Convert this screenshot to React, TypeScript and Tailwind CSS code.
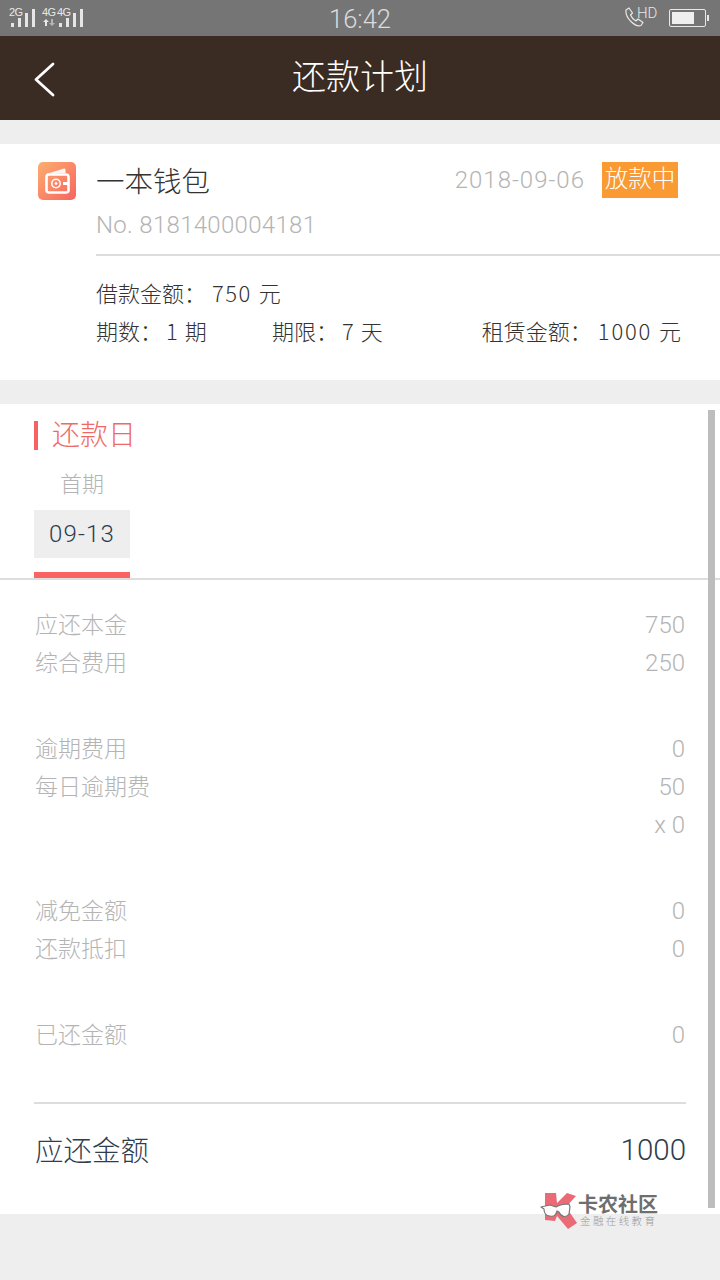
function SignalBars() {
  return (
    <div className="flex items-end gap-[4px]">
      {[4, 9, 14, 18].map((h, i) => (
        <span key={i} className="w-[3px] bg-[#e6e6e6]" style={{ height: h }} />
      ))}
    </div>
  );
}

function StatusBar() {
  return (
    <div className="relative h-[36px] bg-[#757575] font-['Liberation_Sans'] font-normal text-[#e8e8e8]">
      <div className="absolute left-[9px] top-[7px] text-[11px] leading-[11px] tracking-[-0.5px]">2G</div>
      <div className="absolute left-[11px] top-[9px]"><SignalBars /></div>
      <div className="absolute left-[42px] top-[7px] text-[11px] leading-[11px] tracking-[-0.5px]">4G</div>
      <div className="absolute left-[57px] top-[7px] text-[11px] leading-[11px] tracking-[-0.5px]">4G</div>
      <svg className="absolute left-[43px] top-[19px]" width="12" height="7" viewBox="0 0 12 7" fill="#e8e8e8">
        <path d="M3 0l3 3H4v4H2V3H0z" />
        <path d="M9 7L6 4h2V0h2v4h2z" opacity="0.55" />
      </svg>
      <div className="absolute left-[59px] top-[9px]"><SignalBars /></div>
      <div className="absolute inset-x-0 top-[3px] text-center font-['Roboto'] text-[25.5px] font-light leading-[32px] text-[#dcdcdc]">
        16:42
      </div>
      <svg className="absolute left-[625px] top-[7px]" width="21" height="20" viewBox="0 0 21 20" fill="none" stroke="#e8e8e8" strokeWidth="1.2" strokeLinejoin="round">
        <path d="M1 3l3-2 3.5 5-2 2c1 2.500 3 4.500 5.500 6l2-2 5 3.500-2 3c-3 1-6.500-.5-10-4S.5 6.500 1 3z" />
      </svg>
      <div className="absolute left-[637px] top-[4px] font-['Roboto'] text-[15px] font-light leading-[18px]">HD</div>
      <div className="absolute left-[669px] top-[9px] flex h-[18px] w-[37px] items-center rounded-[2px] border border-[#e8e8e8] p-[2px]">
        <div className="h-full w-[22px] bg-[#efefef]" />
      </div>
      <div className="absolute left-[707px] top-[15px] h-[6px] w-[2px] bg-[#e8e8e8]" />
    </div>
  );
}

function Header() {
  return (
    <div className="relative flex h-[84px] items-center justify-center bg-[#3a2c23] pb-[7px]">
      <svg className="absolute left-[33px] top-[25px]" width="24" height="38" viewBox="0 0 24 38" fill="none" stroke="#fff" strokeWidth="2.8" strokeLinecap="round" strokeLinejoin="round">
        <path d="M20 3L3 18.500 20 34" />
      </svg>
      <span className="text-[34px] leading-[40px] text-white">还款计划</span>
    </div>
  );
}

function WalletIcon() {
  return (
    <svg width="38" height="38" viewBox="0 0 38 38" className="shrink-0">
      <defs>
        <linearGradient id="wallet" x1="0" y1="0" x2="1" y2="1">
          <stop offset="0" stopColor="#fcae70" />
          <stop offset="1" stopColor="#f7645f" />
        </linearGradient>
      </defs>
      <rect width="38" height="38" rx="5" fill="url(#wallet)" />
      <path d="M8 12L26 6.500c1 0 1.500.5 1.500 1.500V11z" fill="#fff" opacity="0.9" />
      <rect x="8.500" y="12.500" width="22" height="18" rx="2.500" fill="none" stroke="#fff" strokeWidth="2.600" />
      <circle cx="18" cy="21.500" r="4.200" fill="none" stroke="#fff" strokeWidth="1.500" />
      <path d="M18 19.800l1.700 1.700-1.700 1.700-1.700-1.700z" fill="#fff" />
      <rect x="25" y="20" width="6" height="3" fill="#fff" />
    </svg>
  );
}

function LoanCard() {
  return (
    <div className="flex h-[236px] gap-[20px] bg-white pl-[38px] pt-[18px]">
      <WalletIcon />
      <div className="min-w-0 flex-1">
        <div className="flex h-[36px] pr-[42px]">
          <span className="text-[28.500px] leading-[36px] text-[#333]">一本钱包</span>
          <span className="ml-auto font-['Roboto'] text-[24px] font-light leading-[37px] tracking-[1px] text-[#b4b4b4]">2018-09-06</span>
          <span className="ml-[17px] h-[36px] w-[76px] bg-[#f99a33] text-center text-[23.500px] leading-[31px] text-white">放款中</span>
        </div>
        <div className="mt-[9px] font-['Roboto'] text-[24px] font-light leading-[36px] tracking-[0.3px] text-[#b4b4b4]">
          No. 8181400004181
        </div>
        <div className="mt-[11px] h-[2px] bg-[#ddd]" />
        <div className="mt-[17px] text-[22px] leading-[38px] text-[#333]">
          借款金额：<span className="ml-[6px] tracking-[1.500px]">750</span> <span className="ml-[2px]">元</span>
        </div>
        <div className="flex pr-[39px] text-[22px] leading-[38px] text-[#333]">
          <span className="w-[176px]">期数：<span className="ml-[4px]">1</span> <span className="ml-[2px]">期</span></span>
          <span>期限：<span className="ml-[4px]">7</span> <span className="ml-[2px]">天</span></span>
          <span className="ml-auto">租赁金额：<span className="ml-[6px] tracking-[1.800px]">1000</span> <span className="ml-[2px]">元</span></span>
        </div>
      </div>
    </div>
  );
}

function Row({ label, value }: { label: string; value: string }) {
  return (
    <div className="flex h-[38px] items-center justify-between text-[23px] text-[#b4b4b4]">
      <span>{label}</span>
      <span className="pt-[3px] font-['Roboto'] text-[24px] font-light">{value}</span>
    </div>
  );
}

function RepaySection() {
  return (
    <div className="relative h-[810px] bg-white">
      <div className="px-[34px] pt-[17px]">
        <div className="flex h-[29px] items-center border-l-[4px] border-[#f66161] pl-[14px] text-[28px] text-[#ef6a66]">
          <span className="-mt-[5px]">还款日</span>
        </div>
      </div>
      <div className="ml-[34px] mt-[17px] w-[96px]">
        <div className="h-[34px] text-center text-[22px] leading-[30px] text-[#b4b4b4]">首期</div>
        <div className="mt-[9px] h-[48px] bg-[#eeeeee] text-center font-['Roboto'] text-[24px] font-light leading-[48px] tracking-[1.200px] text-[#2f3d4f]">09-13</div>
        <div className="mt-[14px] h-[6px] bg-[#fb6262]" />
      </div>
      <div className="h-[2px] bg-[#ddd]" />

      <div className="px-[35px] pt-[24px]">
        <Row label="应还本金" value="750" />
        <Row label="综合费用" value="250" />
        <div className="mt-[48px]">
          <Row label="逾期费用" value="0" />
          <Row label="每日逾期费" value="50" />
          <div className="flex h-[38px] items-center justify-end pt-[3px] font-['Roboto'] text-[24px] font-light text-[#b4b4b4]">x 0</div>
        </div>
        <div className="mt-[48px]">
          <Row label="减免金额" value="0" />
          <Row label="还款抵扣" value="0" />
        </div>
        <div className="mt-[48px]">
          <Row label="已还金额" value="0" />
        </div>
      </div>

      <div className="mx-[34px] mt-[50px] h-[2px] bg-[#ddd]" />
      <div className="flex h-[90px] items-center justify-between px-[35px] pr-[34px] text-[#2f3d4f]">
        <span className="text-[28.500px]">应还金额</span>
        <span className="pt-[2px] font-['Roboto'] text-[29.500px] font-light">1000</span>
      </div>

      <div className="absolute left-[708px] top-[6px] h-[798px] w-[7px] bg-[#bdbdbd]" />
    </div>
  );
}

function Watermark() {
  return (
    <div className="absolute left-[540px] top-[1192px] flex items-start">
      <svg width="38" height="38" viewBox="0 0 38 38" className="shrink-0">
        <path d="M5 1h11l1 10L27 1l9 3-10 11 11 16-9 6-11-13-2 5-10-1z" fill="#ea6a76" />
        <path d="M1 15l9-2 6 2c3-2 7-3 13-3l1 3-1 7c-3 4-8 3-10-2l-2-1c-1 4-3 6-7 5-4 0-6-3-6-7z" fill="#fff" stroke="#777" strokeWidth="1.200" strokeLinejoin="round" />
      </svg>
      <div className="text-[#6e6e6e]">
        <div className="mt-[2px] text-[20px] font-bold leading-[20px]">卡农社区</div>
        <div className="mt-[1px] whitespace-nowrap pl-[2px] text-[10.500px] leading-[12px] tracking-[2.400px] text-[#9a9a9a]">金融在线教育</div>
      </div>
    </div>
  );
}

export default function App() {
  return (
    <div className="relative h-[1280px] w-[720px] overflow-hidden bg-[#eeeeee] font-['Noto_Sans_CJK_SC',sans-serif] font-light">
      <StatusBar />
      <Header />
      <div className="mt-[24px]"><LoanCard /></div>
      <div className="mt-[24px]"><RepaySection /></div>
      <Watermark />
    </div>
  );
}
